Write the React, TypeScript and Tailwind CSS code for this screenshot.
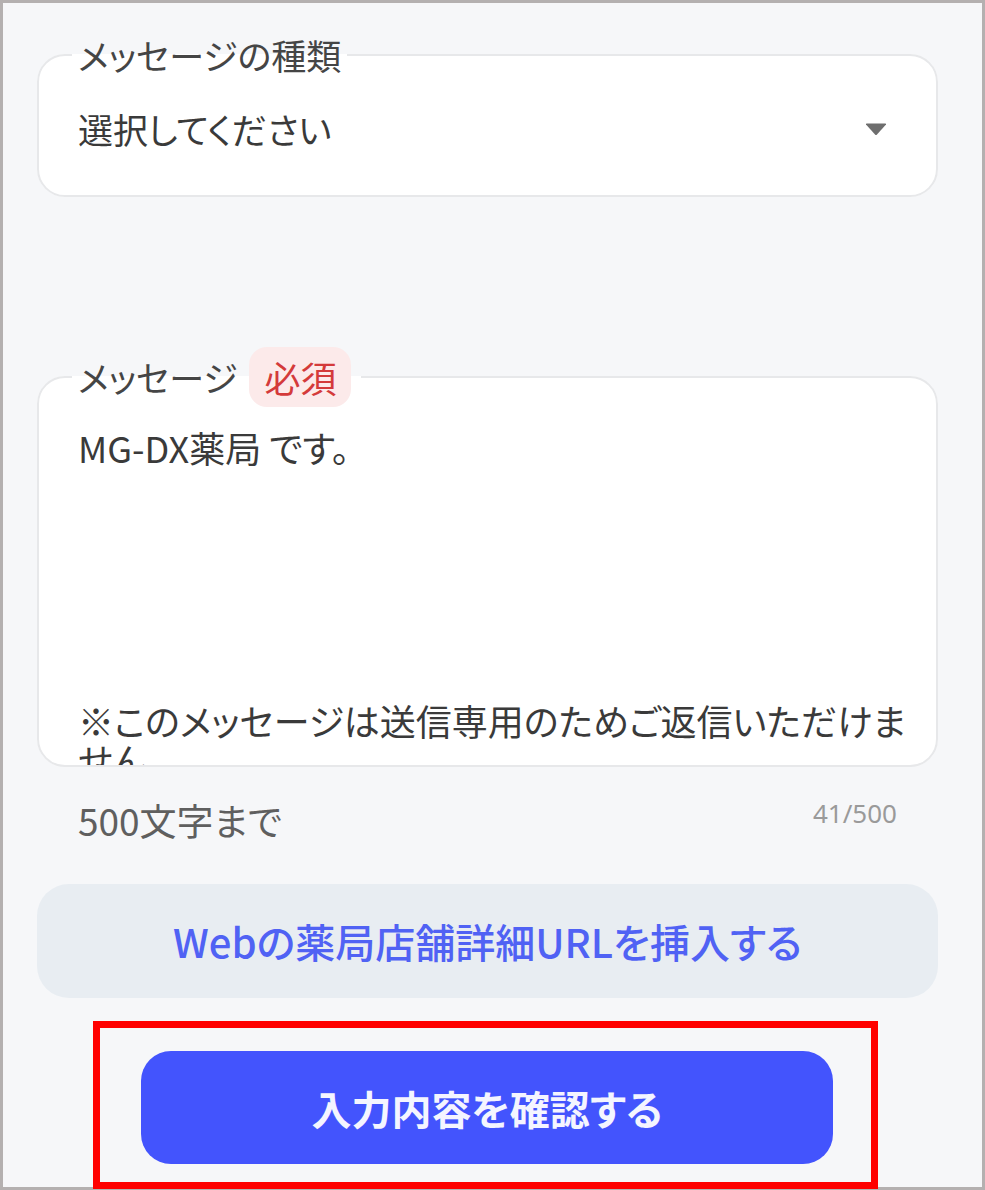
import React from "react";

const messageLines = [
  "MG-DX薬局 です。",
  "",
  "",
  "",
  "",
  "",
  "",
  "※このメッセージは送信専用のためご返信いただけま",
  "せん。",
];

function DropArrow() {
  return (
    <svg width="22" height="13" viewBox="0 0 22 13" className="shrink-0">
      <path d="M1 1.5 Q0.5 0.5 2 0.5 L20 0.5 Q21.5 0.5 21 1.5 L12 11.5 Q11 12.5 10 11.5 Z" fill="#6e6e6e" />
    </svg>
  );
}

export default function App() {
  return (
    <div className="w-[985px] h-[1190px] border-[3px] border-[#b4b0b0] bg-[#f6f7f9] pl-[34px] pr-[44px] pt-[32px] font-['Noto_Sans_CJK_JP',sans-serif] text-[#3a3a3a] [font-feature-settings:'palt']">
      {/* message type select */}
      <fieldset className="rounded-[28px] border-2 border-[#e7e8ea] bg-white pl-[33px] pr-[49px] pt-[34px] pb-[46px]">
        <legend className="px-[6px] text-[35px] leading-[40px] text-[#454545]">メッセージの種類</legend>
        <div className="flex items-center justify-between pl-[6px]">
          <span className="text-[35px] leading-[40px]">選択してください</span>
          <DropArrow />
        </div>
      </fieldset>

      {/* message body */}
      <fieldset className="mt-[150px] rounded-[28px] border-2 border-[#e7e8ea] bg-white pl-[33px] pr-[10px] pt-[21px]">
        <legend className="flex h-[60px] items-center pl-[6px] pr-[10px]">
          <span className="text-[35px] leading-[40px] text-[#454545]">メッセージ</span>
          <span className="ml-[12px] flex h-[60px] items-center rounded-[18px] bg-[#fceaea] px-[15px] text-[36px] text-[#d43a3a]">
            必須
          </span>
        </legend>
        <div className="h-[337px] overflow-hidden pl-[6px]">
          {messageLines.map((line, i) => (
            <div key={i} className="h-[39px] whitespace-nowrap text-[36px] leading-[39px]">
              {line}
            </div>
          ))}
        </div>
      </fieldset>

      <div className="mt-[33px] flex items-start justify-between px-[41px]">
        <span className="text-[37px] leading-[40px] text-[#5f5f5f]">500文字まで</span>
        <span className="font-['Noto_Sans',sans-serif] text-[26px] leading-[26px] text-[#9a9a9a]">41/500</span>
      </div>

      <button className="mt-[44px] flex h-[114px] w-full items-center justify-center rounded-[32px] bg-[#e8edf2] text-[40px] font-medium text-[#5062f4]">
        Webの薬局店舗詳細URLを挿入する
      </button>

      <div className="ml-[56px] mt-[23px] h-[168px] w-[785px] border-[7px] border-[#ff0000] pl-[41px] pt-[23px]">
        <button className="flex h-[113px] w-[692px] items-center justify-center rounded-[30px] bg-[#4354fd] text-[40px] font-bold text-[#f4f5ff]">
          入力内容を確認する
        </button>
      </div>
    </div>
  );
}
